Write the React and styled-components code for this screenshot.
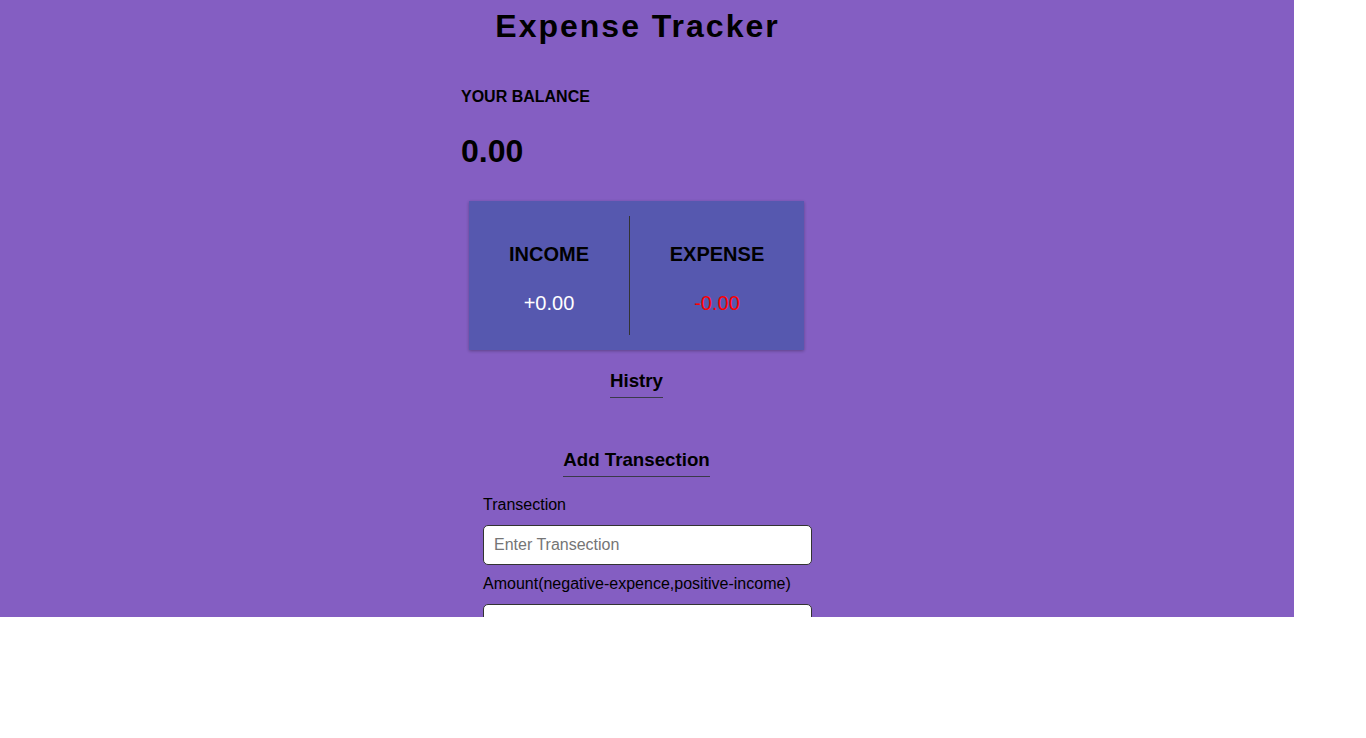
import styled, { createGlobalStyle } from "styled-components";

const GlobalStyle = createGlobalStyle`
  body {
    margin: 0;
    background: #fff;
    font-family: "Liberation Sans", Arial, sans-serif;
  }
`;

const Page = styled.div`
  width: 1294px;
  height: 617px;
  overflow: hidden;
  background: #845ec2;
`;

const Column = styled.div`
  width: 351px;
  margin-left: 461px;
  display: flex;
  flex-direction: column;
`;

const Title = styled.h1`
  margin: 6px 0 0;
  padding-left: 2px;
  font-size: 32px;
  line-height: 40px;
  letter-spacing: 2px;
  text-align: center;
  color: #000;
`;

const BalanceLabel = styled.h4`
  margin: 41px 0 0;
  font-size: 16px;
  line-height: 20px;
  color: #000;
`;

const Balance = styled.h1`
  margin: 24px 0 0;
  font-size: 32px;
  line-height: 40px;
  color: #000;
`;

const Card = styled.div`
  margin: 30px 8px 0;
  height: 149px;
  padding: 15px 0;
  box-sizing: border-box;
  display: flex;
  background: #5658af;
  box-shadow: 0 1px 3px rgba(0, 0, 0, 0.3);
`;

const Half = styled.div`
  width: ${(p) => p.w}px;
  display: flex;
  flex-direction: column;
  align-items: center;
  padding-top: 26px;
  box-sizing: border-box;
`;

const Divider = styled.div`
  width: 1px;
  background: #333;
`;

const HalfTitle = styled.h4`
  margin: 0;
  font-size: 20px;
  line-height: 24px;
  color: #000;
`;

const Money = styled.p`
  margin: 25px 0 0;
  font-size: 20px;
  line-height: 24px;
  color: ${(p) => (p.minus ? "red" : "#fff")};
`;

const HeadRow = styled.div`
  display: flex;
  justify-content: center;
  margin-top: ${(p) => p.top}px;
`;

const SubHead = styled.h3`
  margin: 0;
  font-size: 18.72px;
  line-height: 22px;
  padding-bottom: 5px;
  border-bottom: 1px solid #3a3a4a;
  color: #000;
`;

const Form = styled.form`
  padding-left: 22px;
  display: flex;
  flex-direction: column;
`;

const Label = styled.label`
  display: block;
  font-size: 16px;
  line-height: 18px;
  color: #000;
  margin: ${(p) => p.top}px 0 11px;
`;

const Input = styled.input`
  width: 100%;
  height: 40px;
  box-sizing: border-box;
  margin: 0;
  padding: 0 10px;
  border: 1px solid #333;
  border-radius: 5px;
  background: #fff;
  font-family: "Liberation Sans", Arial, sans-serif;
  font-size: 16px;
  outline: none;

  &::placeholder {
    color: #757575;
  }
`;

export default function App() {
  return (
    <>
      <GlobalStyle />
      <Page>
        <Column>
          <Title>Expense Tracker</Title>
          <BalanceLabel>YOUR BALANCE</BalanceLabel>
          <Balance>0.00</Balance>
          <Card>
            <Half w={160}>
              <HalfTitle>INCOME</HalfTitle>
              <Money>+0.00</Money>
            </Half>
            <Divider />
            <Half w={174}>
              <HalfTitle>EXPENSE</HalfTitle>
              <Money minus>-0.00</Money>
            </Half>
          </Card>
          <HeadRow top={20}>
            <SubHead>Histry</SubHead>
          </HeadRow>
          <HeadRow top={51}>
            <SubHead>Add Transection</SubHead>
          </HeadRow>
          <Form onSubmit={(e) => e.preventDefault()}>
            <Label top={19}>Transection</Label>
            <Input type="text" placeholder="Enter Transection" />
            <Label top={10}>Amount(negative-expence,positive-income)</Label>
            <Input type="number" />
          </Form>
        </Column>
      </Page>
    </>
  );
}
